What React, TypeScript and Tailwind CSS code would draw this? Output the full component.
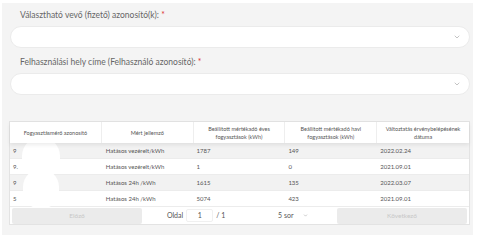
import { ChevronDown } from 'lucide-react';

const rows = [
  { id: '9', idEnd: '30', type: 'Hatásos vezérelt/kWh', year: '1787', month: '149', date: '2022.02.24' },
  { id: '9.', idEnd: '', type: 'Hatásos vezérelt/kWh', year: '1', month: '0', date: '2021.09.01' },
  { id: '9', idEnd: '22', type: 'Hatásos 24h /kWh', year: '1615', month: '135', date: '2022.03.07' },
  { id: '5', idEnd: '.22', type: 'Hatásos 24h /kWh', year: '5074', month: '423', date: '2021.09.01' },
];

const headers = [
  'Fogyasztásmérő azonosító',
  'Mért jellemző',
  'Beállított mértékadó éves fogyasztások (kWh)',
  'Beállított mértékadó havi fogyasztások (kWh)',
  'Változtatás érvénybelépésének dátuma',
];

function Select() {
  return (
    <div className="h-[22px] rounded-full bg-white border border-[#ebebeb] flex items-center justify-end pr-[8px]">
      <ChevronDown className="w-[8px] h-[8px] text-[#888]" strokeWidth={1.5} />
    </div>
  );
}

export default function App() {
  return (
    <div className="w-[480px] h-[241px] bg-white pt-[3px] pl-[2px]" style={{ fontFamily: 'Lato, "Open Sans", sans-serif' }}>
      <div className="w-[471px] h-[232px] bg-[#f4f4f4] pl-[8px] pr-[3px] pt-[6px]">
        <div className="pl-[10px] text-[8.5px] leading-[12px] text-[#666] mb-[5px]">
          Választható vevő (fizető) azonosító(k): <span className="text-[#d33]">*</span>
        </div>
        <Select />
        <div className="pl-[10px] text-[8.5px] leading-[12px] text-[#666] mt-[8px] mb-[5px]">
          Felhasználási hely címe (Felhasználó azonosító): <span className="text-[#d33]">*</span>
        </div>
        <Select />

        <div className="mt-[26px] -ml-[1px] w-[461px] bg-white border border-[#e3e3e3] text-[#555]">
          <div className="grid grid-cols-5 h-[21px] bg-white shadow-[0_2px_4px_rgba(0,0,0,0.08)] relative z-10 text-[5.5px]">
            {headers.map((h, i) => (
              <div
                key={h}
                className={`flex items-center justify-center text-center px-[4px] leading-[8px] ${i < 4 ? 'border-r border-[#eee]' : ''}`}
              >
                {h}
              </div>
            ))}
          </div>
          <div className="relative text-[6px]">
            {rows.map((r, i) => (
              <div
                key={i}
                className={`grid grid-cols-5 h-[16px] items-center border-b border-[#ececec] ${i % 2 === 0 ? 'bg-[#f2f2f2]' : 'bg-white'}`}
              >
                <div className="pl-[3px] flex justify-between pr-[54px]">
                  <span>{r.id}</span>
                  <span>{r.idEnd}</span>
                </div>
                <div className="pl-[4px]">{r.type}</div>
                <div className="pl-[3px]">{r.year}</div>
                <div className="pl-[3px]">{r.month}</div>
                <div className="pl-[3px]">{r.date}</div>
              </div>
            ))}
            <div className="absolute left-[12px] top-[-6px] w-[38px] h-[42px] rounded-full bg-white" />
            <div className="absolute left-[13px] top-[26px] w-[36px] h-[40px] rounded-full bg-white" />
          </div>
          <div className="flex items-center h-[17px] px-[2px] relative">
            <div className="flex-[1] h-[16px] bg-[#ebebeb] rounded-[2px] flex items-center justify-center text-[#c8c8c8] text-[6.5px]">
              Előző
            </div>
            <div className="flex-[1.5] flex items-center justify-around text-[7px] text-[#555]">
              <div className="flex items-center gap-[3px]">
                <span>Oldal</span>
                <div className="w-[27px] h-[13px] bg-white border border-[#f0f0f0] rounded-[2px] flex items-center justify-center">1</div>
                <span>/ 1</span>
              </div>
              <div className="w-[37px] h-[13px] bg-white rounded-[2px] flex items-center justify-between pl-[3px] pr-[4px]">
                <span>5 sor</span>
                <ChevronDown className="w-[5px] h-[5px] text-[#888]" strokeWidth={2} />
              </div>
            </div>
            <div className="flex-[1] h-[16px] bg-[#ebebeb] rounded-[2px] flex items-center justify-center text-[#c8c8c8] text-[6.5px]">
              Következő
            </div>
          </div>
        </div>
      </div>
    </div>
  );
}
